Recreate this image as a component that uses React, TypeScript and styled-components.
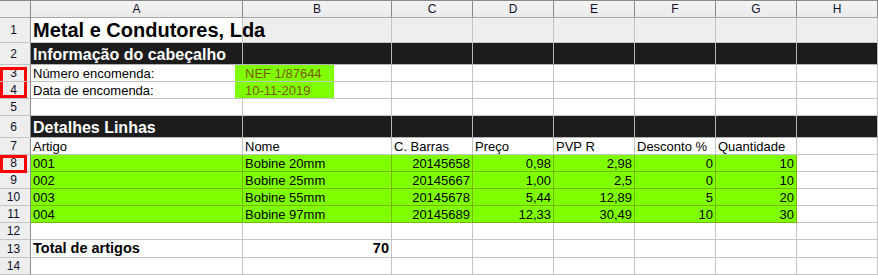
import React from 'react';
import styled, { createGlobalStyle, css } from 'styled-components';

const Global = createGlobalStyle`
  html, body { margin: 0; padding: 0; background: #ffffff; }
  body { font-family: "Liberation Sans", Arial, sans-serif; overflow: hidden; }
`;

type Fill = 'white' | 'gray' | 'black' | 'green';
type Hl = 'none' | 'tail' | 'head';
type Mark = 'none' | 'top' | 'bottom' | 'single';

const ROW_HEIGHTS = [18, 25, 22, 17, 17, 17, 22, 17, 17, 17, 17, 17, 17, 18, 17];
const COLS = ['A', 'B', 'C', 'D', 'E', 'F', 'G', 'H'];

const Sheet = styled.div`
  display: grid;
  grid-template-columns: 31px 212px 149px repeat(6, 81px);
  grid-template-rows: ${ROW_HEIGHTS.map((h) => `${h}px`).join(' ')};
  width: 878px;
  height: 275px;
  overflow: hidden;
  font-family: "Liberation Sans", Arial, sans-serif;
`;

const Corner = styled.div`
  box-sizing: border-box;
  background: #eeeeee;
  border-top: 1px solid #8a8a8a;
  border-right: 1px solid #8a8a8a;
  border-bottom: 1px solid #a8a8a8;
`;

const ColHeader = styled.div`
  box-sizing: border-box;
  background: linear-gradient(#f4f4f4, #ebebeb);
  border-top: 1px solid #8a8a8a;
  border-right: 1px solid #8a8a8a;
  border-bottom: 1px solid #a8a8a8;
  display: flex;
  align-items: center;
  justify-content: center;
  font-size: 12px;
  color: #10102a;
`;

const RowHeader = styled.div<{ $mark: Mark }>`
  position: relative;
  box-sizing: border-box;
  background: #eeeeee;
  border-right: 1px solid #8a8a8a;
  border-bottom: 1px solid #c4c4c4;
  display: flex;
  align-items: center;
  justify-content: center;
  padding-right: 3px;
  font-size: 12px;
  color: #10102a;

  ${({ $mark }) =>
    $mark !== 'none' &&
    css`
      &::after {
        content: '';
        position: absolute;
        z-index: 3;
        left: 0;
        width: 27px;
        box-sizing: border-box;
        border: 3px solid #ff0000;
        ${$mark === 'top' &&
        css`
          top: 2px;
          bottom: 0;
          border-bottom: none;
        `}
        ${$mark === 'bottom' &&
        css`
          top: 0;
          bottom: 0;
          border-top: none;
        `}
        ${$mark === 'single' &&
        css`
          top: 0;
          bottom: -2px;
        `}
      }
    `}
`;

const FILL: Record<Fill, { bg: string; line: string; ink: string }> = {
  white: { bg: '#ffffff', line: '#c4c4c4', ink: '#000000' },
  gray: { bg: '#eeeeee', line: '#c4c4c4', ink: '#000000' },
  black: { bg: '#1c1c1c', line: '#b4b4b4', ink: '#ffffff' },
  green: { bg: '#80ff00', line: '#76b800', ink: '#000000' },
};

const GREEN = '#80ff00';

const Cell = styled.div<{
  $fill: Fill;
  $right?: boolean;
  $bold?: boolean;
  $size?: number;
  $ink?: string;
  $hl?: Hl;
}>`
  box-sizing: border-box;
  min-width: 0;
  display: flex;
  align-items: flex-end;
  justify-content: ${({ $right }) => ($right ? 'flex-end' : 'flex-start')};
  padding: 0 ${({ $right }) => ($right ? '2px' : '0')} 0 ${({ $right }) => ($right ? '0' : '2px')};
  background: ${({ $fill }) => FILL[$fill].bg};
  border-right: 1px solid ${({ $fill }) => FILL[$fill].line};
  border-bottom: 1px solid ${({ $fill }) => FILL[$fill].line};
  color: ${({ $fill, $ink }) => $ink ?? FILL[$fill].ink};
  font-size: ${({ $size }) => $size ?? 13}px;
  font-weight: ${({ $bold }) => ($bold ? 700 : 400)};
  line-height: ${({ $size }) => Math.round(($size ?? 13) * 1.17)}px;
  white-space: nowrap;
  overflow: visible;

  ${({ $hl }) =>
    $hl === 'tail' &&
    css`
      background: linear-gradient(to right, transparent 204px, ${GREEN} 204px);
      border-right-color: ${GREEN};
    `}
  ${({ $hl }) =>
    $hl === 'head' &&
    css`
      background: linear-gradient(to right, ${GREEN} 91px, #ffffff 91px);
    `}
`;

/* text is stacked above neighbouring cell backgrounds so it can spill over, as in a spreadsheet */
const CellText = styled.span`
  position: relative;
  z-index: 1;
`;

type CellDef = {
  text?: string;
  fill?: Fill;
  right?: boolean;
  bold?: boolean;
  size?: number;
  ink?: string;
  hl?: Hl;
};

type RowDef = { n: number; mark?: Mark; cells: CellDef[] };

const blank = (fill: Fill = 'white'): CellDef => ({ fill });
const fillRow = (fill: Fill, first: CellDef = {}): CellDef[] => [
  { fill, ...first },
  ...Array.from({ length: 7 }, () => blank(fill)),
];

const items = [
  ['001', 'Bobine 20mm', '20145658', '0,98', '2,98', '0', '10'],
  ['002', 'Bobine 25mm', '20145667', '1,00', '2,5', '0', '10'],
  ['003', 'Bobine 55mm', '20145678', '5,44', '12,89', '5', '20'],
  ['004', 'Bobine 97mm', '20145689', '12,33', '30,49', '10', '30'],
];

const itemRow = (vals: string[]): CellDef[] => [
  ...vals.map((v, i) => ({ text: v, fill: 'green' as Fill, right: i >= 2 })),
  blank(),
];

const ROWS: RowDef[] = [
  {
    n: 1,
    cells: [
      { text: 'Metal e Condutores, Lda', fill: 'white', bold: true, size: 20 },
      ...Array.from({ length: 7 }, () => blank('gray')),
    ],
  },
  { n: 2, cells: fillRow('black', { text: 'Informação do cabeçalho', bold: true, size: 16 }) },
  {
    n: 3,
    mark: 'top',
    cells: [
      { text: 'Número encomenda:', hl: 'tail' },
      { text: 'NEF 1/87644', hl: 'head', ink: '#7a5a00' },
      ...Array.from({ length: 6 }, () => blank()),
    ],
  },
  {
    n: 4,
    mark: 'bottom',
    cells: [
      { text: 'Data de encomenda:', hl: 'tail' },
      { text: '10-11-2019', hl: 'head', ink: '#7a5a00' },
      ...Array.from({ length: 6 }, () => blank()),
    ],
  },
  { n: 5, cells: fillRow('white') },
  { n: 6, cells: fillRow('black', { text: 'Detalhes Linhas', bold: true, size: 16 }) },
  {
    n: 7,
    cells: [
      ...['Artigo', 'Nome', 'C. Barras', 'Preço', 'PVP R', 'Desconto %', 'Quantidade'].map((t) => ({
        text: t,
      })),
      blank(),
    ],
  },
  { n: 8, mark: 'single', cells: itemRow(items[0]) },
  { n: 9, cells: itemRow(items[1]) },
  { n: 10, cells: itemRow(items[2]) },
  { n: 11, cells: itemRow(items[3]) },
  { n: 12, cells: fillRow('white') },
  {
    n: 13,
    cells: [
      { text: 'Total de artigos', bold: true, size: 14.5 },
      { text: '70', bold: true, size: 14.5, right: true },
      ...Array.from({ length: 6 }, () => blank()),
    ],
  },
  { n: 14, cells: fillRow('white') },
];

export default function App() {
  return (
    <>
      <Global />
      <Sheet>
        <Corner />
        {COLS.map((c) => (
          <ColHeader key={c}>{c}</ColHeader>
        ))}
        {ROWS.map((row) => (
          <React.Fragment key={row.n}>
            <RowHeader $mark={row.mark ?? 'none'}>{row.n}</RowHeader>
            {row.cells.map((c, i) => (
              <Cell
                key={i}
                $fill={c.fill ?? 'white'}
                $right={c.right}
                $bold={c.bold}
                $size={c.size}
                $ink={c.ink}
                $hl={c.hl ?? 'none'}
              >
                {c.text && <CellText>{c.text}</CellText>}
              </Cell>
            ))}
          </React.Fragment>
        ))}
      </Sheet>
    </>
  );
}
